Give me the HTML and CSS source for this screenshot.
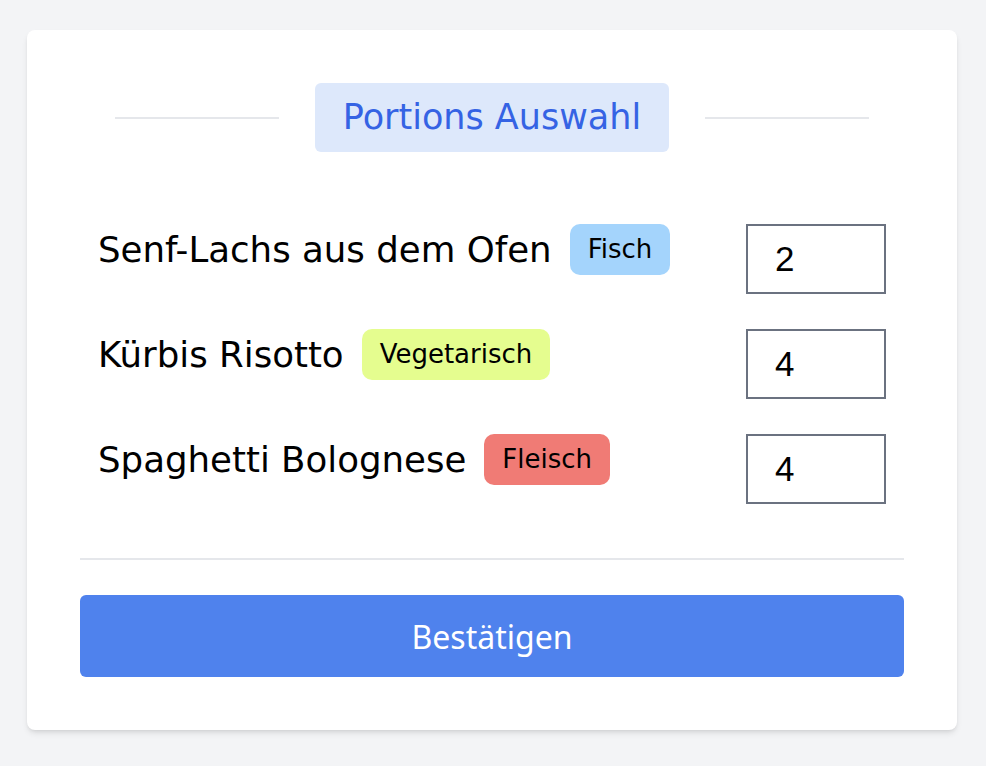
FILE: index.html
```html
<!DOCTYPE html>
<html lang="de">
<head>
    <meta charset="UTF-8">
    <title>Portions Auswahl</title>
    <link rel="stylesheet" href="styles.css">
</head>
<body>
    <div class="card">
        <div class="card-header">
            <span class="header-line"></span>
            <h1 class="title">Portions Auswahl</h1>
            <span class="header-line"></span>
        </div>
        <div class="meal-list">
            <div class="meal-row">
                <div class="meal-info">
                    <span class="meal-name">Senf-Lachs aus dem Ofen</span>
                    <span class="tag tag-fish">Fisch</span>
                </div>
                <input class="portion-input" type="number" value="2" min="0">
            </div>
            <div class="meal-row">
                <div class="meal-info">
                    <span class="meal-name">Kürbis Risotto</span>
                    <span class="tag tag-veggie">Vegetarisch</span>
                </div>
                <input class="portion-input" type="number" value="4" min="0">
            </div>
            <div class="meal-row">
                <div class="meal-info">
                    <span class="meal-name">Spaghetti Bolognese</span>
                    <span class="tag tag-meat">Fleisch</span>
                </div>
                <input class="portion-input" type="number" value="4" min="0">
            </div>
        </div>
        <hr class="divider">
        <button class="confirm-button" type="button">Bestätigen</button>
    </div>
</body>
</html>
```

FILE: styles.css
```css
body {
    margin: 0;
    padding: 30px 29px 36px 27px;
    background-color: #f3f4f6;
    font-family: "DejaVu Sans", Verdana, sans-serif;
}

.card {
    padding: 53px;
    border-radius: 8px;
    background-color: #ffffff;
    box-shadow: 0 4px 6px -1px rgba(0, 0, 0, 0.1), 0 2px 4px -2px rgba(0, 0, 0, 0.1);
}

.card-header {
    display: flex;
    align-items: center;
    gap: 36px;
    margin: 0 35px;
}

.header-line {
    flex: 1;
    height: 2px;
    background-color: #e5e7eb;
}

.title {
    margin: 0;
    padding: 0 28px;
    height: 69px;
    line-height: 69px;
    border-radius: 6px;
    background-color: #dde8fb;
    color: #3563e4;
    font-size: 35px;
    font-weight: normal;
}

.meal-list {
    display: flex;
    flex-direction: column;
    gap: 35px;
    margin-top: 72px;
    padding: 0 18px 0 18px;
}

.meal-row {
    display: flex;
    justify-content: space-between;
    align-items: flex-start;
}

.meal-info {
    display: flex;
    align-items: center;
    gap: 18px;
    height: 51px;
}

.meal-name {
    font-size: 35.6px;
    color: #000000;
}

.tag {
    height: 51px;
    line-height: 51px;
    padding: 0 18px;
    border-radius: 10px;
    font-size: 26px;
    color: #000000;
}

.tag-fish {
    background-color: #a4d4fc;
}

.tag-veggie {
    background-color: #e5fd8f;
}

.tag-meat {
    background-color: #f07b75;
}

.portion-input {
    box-sizing: border-box;
    width: 140px;
    height: 70px;
    margin: 0;
    padding: 0 0 0 27px;
    border: 2px solid #6b7280;
    border-radius: 0;
    font-family: "Liberation Sans", Arial, sans-serif;
    font-size: 35px;
    color: #000000;
    background: #ffffff;
    -moz-appearance: textfield;
}

.portion-input::-webkit-outer-spin-button,
.portion-input::-webkit-inner-spin-button {
    -webkit-appearance: none;
    margin: 0;
}

.divider {
    margin: 54px 0 0;
    height: 2px;
    border: none;
    background-color: #e5e7eb;
}

.confirm-button {
    display: block;
    width: 100%;
    height: 82px;
    margin-top: 35px;
    border: none;
    border-radius: 6px;
    background-color: #4f82ed;
    color: #ffffff;
    font-family: "Noto Sans", "Open Sans", sans-serif;
    font-size: 32px;
    cursor: pointer;
}
```
